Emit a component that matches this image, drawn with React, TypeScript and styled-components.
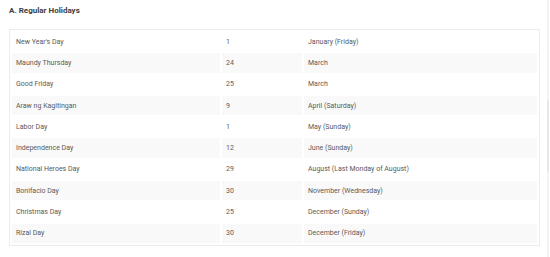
import React from 'react'
import styled, { createGlobalStyle } from 'styled-components'

const GlobalStyle = createGlobalStyle`
    html, body {
        margin: 0;
        padding: 0;
        background: #fff;
    }
    body {
        font-family: Roboto, "Liberation Sans", Arial, sans-serif;
    }
`

const Page = styled.div`
    display: flex;
    width: 550px;
    height: 257px;
    overflow: hidden;
`

const Content = styled.div`
    flex: 1;
    padding: 5px 0 0 9px;
`

const ScrollTrack = styled.div`
    width: 2px;
    margin-right: 1px;
    background: #f2f2f2;
    padding-top: 100px;
`

const ScrollThumb = styled.div`
    height: 72px;
    background: #e8e8e8;
`

const Heading = styled.h3`
    margin: 0 0 13px;
    font-size: 8px;
    line-height: 11px;
    font-weight: 700;
    color: #3d3d3d;
`

const Table = styled.table`
    width: 531px;
    border: 1px solid #ececec;
    border-collapse: separate;
    border-spacing: 2px;
    table-layout: fixed;
`

const Row = styled.tr<{ $striped: boolean }>`
    background: ${props => (props.$striped ? '#f9f9f9' : 'transparent')};
`

const Cell = styled.td`
    height: 19.3px;
    padding: 0 4px;
    font-size: 7px;
    line-height: 10px;
    color: #5a5a5a;
    vertical-align: middle;
    white-space: nowrap;
`

const holidays: [string, string, string][] = [
    ["New Year's Day", '1', 'January (Friday)'],
    ['Maundy Thursday', '24', 'March'],
    ['Good Friday', '25', 'March'],
    ['Araw ng Kagitingan', '9', 'April (Saturday)'],
    ['Labor Day', '1', 'May (Sunday)'],
    ['Independence Day', '12', 'June (Sunday)'],
    ['National Heroes Day', '29', 'August (Last Monday of August)'],
    ['Bonifacio Day', '30', 'November (Wednesday)'],
    ['Christmas Day', '25', 'December (Sunday)'],
    ['Rizal Day', '30', 'December (Friday)'],
]

const App = () => (
    <>
        <GlobalStyle />
        <Page>
            <Content>
                <Heading>A. Regular Holidays</Heading>
                <Table>
                    <colgroup>
                        <col style={{ width: 208 }} />
                        <col style={{ width: 80 }} />
                        <col style={{ width: 233 }} />
                    </colgroup>
                    <tbody>
                        {holidays.map(([name, day, month], i) => (
                            <Row key={name} $striped={i % 2 === 1}>
                                <Cell>{name}</Cell>
                                <Cell>{day}</Cell>
                                <Cell>{month}</Cell>
                            </Row>
                        ))}
                    </tbody>
                </Table>
            </Content>
            <ScrollTrack>
                <ScrollThumb />
            </ScrollTrack>
        </Page>
    </>
)

export default App
